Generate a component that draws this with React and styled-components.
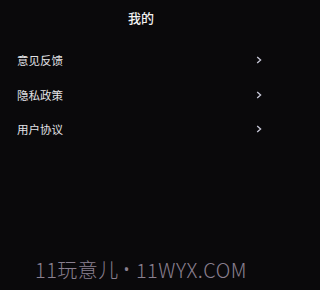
import React from 'react';
import styled, { createGlobalStyle } from 'styled-components';

const GlobalStyle = createGlobalStyle`
  html, body { margin: 0; padding: 0; background: #0a090b; }
  body { font-family: "Noto Sans CJK SC", "Noto Sans", sans-serif; }
`;

const Page = styled.div`
  width: 282px;
  height: 290px;
  display: flex;
  flex-direction: column;
  background: #0a090b;
  overflow: hidden;
`;

const Title = styled.div`
  height: 35px;
  display: flex;
  align-items: center;
  justify-content: center;
  color: #f2f2f2;
  font-size: 13px;
  font-weight: 500;
`;

const Menu = styled.div`
  display: flex;
  flex-direction: column;
  padding-top: 8px;
`;

const Row = styled.div`
  height: 34.5px;
  display: flex;
  align-items: center;
  justify-content: space-between;
  padding: 0 20px 0 17px;
  color: #e2e2e6;
  font-size: 11.5px;
`;

const Chevron = styled.svg`
  width: 6px;
  height: 8px;
`;

const Footer = styled.div`
  margin-top: auto;
  height: 35px;
  display: flex;
  align-items: flex-start;
  justify-content: center;
  color: #8a8090;
  font-size: 20px;
  font-weight: 300;
  letter-spacing: 0.5px;
  white-space: nowrap;
`;

const Dot = styled.span`
  font-family: "Noto Sans", sans-serif;
  margin: 0 5px 0 4px;
`;

const items = ['意见反馈', '隐私政策', '用户协议'];

export default function App() {
  return (
    <Page>
      <GlobalStyle />
      <Title>我的</Title>
      <Menu>
        {items.map((label) => (
          <Row key={label}>
            <span>{label}</span>
            <Chevron viewBox="0 0 6 8">
              <path d="M1.2 1 L4.6 4 L1.2 7" fill="none" stroke="#c8c8d8" strokeWidth="1.3" />
            </Chevron>
          </Row>
        ))}
      </Menu>
      <Footer>
        11玩意儿<Dot>•</Dot>11WYX.COM
      </Footer>
    </Page>
  );
}
